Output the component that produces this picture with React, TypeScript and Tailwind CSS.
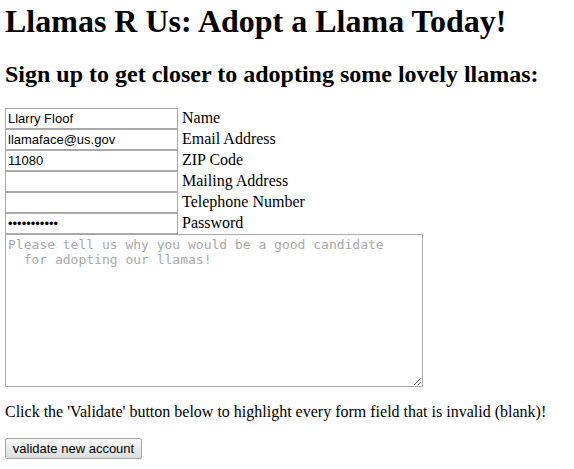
import { useState } from "react";

type Field = {
  label: string;
  type: string;
  value: string;
};

const fields: Field[] = [
  { label: "Name", type: "text", value: "Llarry Floof" },
  { label: "Email Address", type: "text", value: "llamaface@us.gov" },
  { label: "ZIP Code", type: "text", value: "11080" },
  { label: "Mailing Address", type: "text", value: "" },
  { label: "Telephone Number", type: "text", value: "" },
  { label: "Password", type: "password", value: "lovelyllama" },
];

export default function App() {
  const [values, setValues] = useState(fields.map((f) => f.value));

  return (
    <div className="min-h-screen bg-white px-[5px] font-['Liberation_Serif',serif] text-black">
      <h1 className="pt-[3px] text-[32px] font-bold leading-[37px]">
        Llamas R Us: Adopt a Llama Today!
      </h1>
      <h2 className="mt-[20px] text-[24px] font-bold leading-[28px]">
        Sign up to get closer to adopting some lovely llamas:
      </h2>

      <form className="mt-[20px]" onSubmit={(e) => e.preventDefault()}>
        {fields.map((f, i) => (
          <div key={f.label} className="flex h-[21px] items-baseline gap-[4px]">
            <input
              type={f.type}
              value={values[i]}
              onChange={(e) =>
                setValues(values.map((v, j) => (j === i ? e.target.value : v)))
              }
              className="box-border h-[21px] w-[173px] border border-[#a9a9a9] bg-white px-[2px] font-['Liberation_Sans',Arial,sans-serif] text-[13px] leading-[15px] outline-none"
            />
            <span className="text-[16px] leading-[18px]">{f.label}</span>
          </div>
        ))}

        <textarea
          placeholder={
            "Please tell us why you would be a good candidate\n  for adopting our llamas!"
          }
          className="box-border block h-[153px] w-[418px] resize border border-[#a9a9a9] bg-white p-[2px] font-['DejaVu_Sans_Mono',monospace] text-[13px] leading-[15px] outline-none placeholder:text-[#a9a9a9]"
        />

        <p className="mt-[16px] text-[16px] leading-[18px]">
          Click the 'Validate' button below to highlight every form field that is invalid (blank)!
        </p>

        <button
          type="submit"
          className="mt-[17px] box-border h-[21px] w-[137px] whitespace-nowrap rounded-[2px] border border-[#a6a6a6] bg-gradient-to-b from-[#f8f8f8] to-[#dddddd] px-[6px] font-['Liberation_Sans',Arial,sans-serif] text-[13px] leading-[15px] text-black"
        >
          validate new account
        </button>
      </form>
    </div>
  );
}
